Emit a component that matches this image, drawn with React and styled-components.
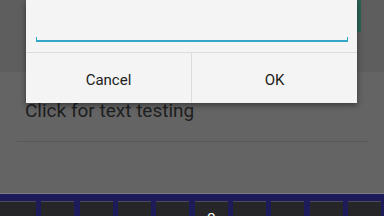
import React from 'react';
import styled, { createGlobalStyle } from 'styled-components';

const GlobalStyle = createGlobalStyle`
    html, body {
        margin: 0;
        padding: 0;
        background: #646464;
    }
    body {
        font-family: Roboto, "Liberation Sans", sans-serif;
    }
`;

const Page = styled.div`
    position: relative;
    width: 384px;
    height: 216px;
    overflow: hidden;
    background-color: #646464;
    display: flex;
    flex-direction: column;
`;
const Header = styled.div`
    height: 72px;
    flex-shrink: 0;
    background-color: #5e5e5e;
    display: flex;
    justify-content: flex-end;
    align-items: flex-start;
    padding-right: 23px;
`;
const TealEdge = styled.div`
    width: 4px;
    height: 32px;
    background-color: #2b6557;
`;
const ListItem = styled.div`
    height: 69px;
    flex-shrink: 0;
    box-sizing: border-box;
    padding: 28px 0 0 25px;
    font-size: 19px;
    line-height: 22px;
    color: #1e1e1e;
`;
const Divider = styled.div`
    height: 1px;
    flex-shrink: 0;
    margin: 0 16px 0 17px;
    background-color: #585858;
`;
const Spacer = styled.div`
    flex: 1;
`;
const Keyboard = styled.div`
    height: 23px;
    flex-shrink: 0;
    box-sizing: border-box;
    border-top: 1px solid #7c7c86;
    background-color: #1e1b5a;
    padding: 7px 3px 0 3px;
    display: grid;
    grid-template-columns: repeat(10, 1fr);
    column-gap: 5.5px;
    overflow: hidden;
`;
const Key = styled.div`
    height: 30px;
    background-color: #262628;
    border-top: 1px solid #4a4a58;
    color: #ffffff;
    font-size: 15px;
    line-height: 15px;
    text-align: center;
    padding-top: 7px;
    box-sizing: border-box;
    &:first-child {
        margin-left: -3px;
    }
`;

const Dialog = styled.div`
    position: absolute;
    top: 0;
    left: 26px;
    width: 331px;
    height: 103px;
    background-color: #f4f4f4;
    box-shadow: 0 2px 6px rgba(0, 0, 0, 0.45);
    display: flex;
    flex-direction: column;
`;
const InputArea = styled.div`
    height: 52px;
    box-sizing: border-box;
    padding: 37px 9px 0 10px;
`;
const Field = styled.div`
    height: 3px;
    border: 1.5px solid #34a6c8;
    border-top: none;
    border-bottom-width: 2px;
`;
const ButtonRow = styled.div`
    flex: 1;
    display: flex;
    border-top: 1px solid #dcdcdc;
`;
const DialogButton = styled.div`
    flex: 1;
    display: flex;
    align-items: center;
    justify-content: center;
    padding-top: 3px;
    font-size: 15px;
    color: #212121;
    border-left: ${p => (p.$divided ? '1px solid #dcdcdc' : 'none')};
`;

const keys = ['', '', '', '', '', 'o', '', '', '', ''];

export default function App() {
    return (
        <Page>
            <GlobalStyle />
            <Header>
                <TealEdge />
            </Header>
            <ListItem>Click for text testing</ListItem>
            <Divider />
            <Spacer />
            <Keyboard>
                {keys.map((k, i) => (
                    <Key key={i}>{k}</Key>
                ))}
            </Keyboard>
            <Dialog>
                <InputArea>
                    <Field />
                </InputArea>
                <ButtonRow>
                    <DialogButton>Cancel</DialogButton>
                    <DialogButton $divided>OK</DialogButton>
                </ButtonRow>
            </Dialog>
        </Page>
    );
}
